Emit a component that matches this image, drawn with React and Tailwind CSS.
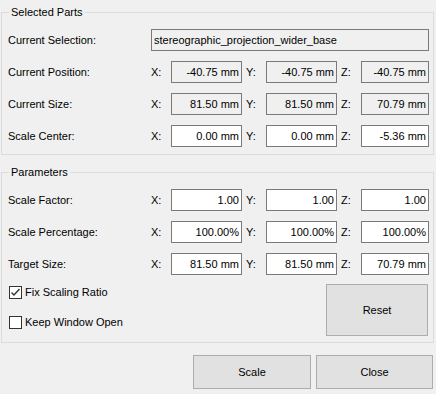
import React from 'react';

const FONT = { fontFamily: '"Liberation Sans", Arial, sans-serif' };

const Field = ({ value, width, editable, left }) => (
  <div
    className={`h-[22px] border border-[#7a7a7a] flex items-center px-[2px] text-[11px] text-black whitespace-nowrap overflow-hidden ${
      editable ? 'bg-white' : 'bg-[#f0f0f0]'
    } ${left ? 'justify-start' : 'justify-end'}`}
    style={{ width }}
  >
    {value}
  </div>
);

const XYZRow = ({ label, values, editable }) => (
  <div className="flex items-center h-[22px]">
    <div className="w-[143px] text-[11px]">{label}</div>
    <div className="w-[20px] text-[11px]">X:</div>
    <Field value={values[0]} width={71} editable={editable} />
    <div className="w-[24px] pl-[4px] text-[11px]">Y:</div>
    <Field value={values[1]} width={71} editable={editable} />
    <div className="w-[24px] pl-[4px] text-[11px]">Z:</div>
    <Field value={values[2]} width={68} editable={editable} />
  </div>
);

const Group = ({ title, className, children }) => (
  <div className={`relative border border-[#dcdcdc] ml-[1px] w-[433px] ${className}`}>
    {/* legend sits over the top border */}
    <span className="absolute -top-[8px] left-[7px] px-[2px] bg-[#f0f0f0] text-[11px] leading-[14px]">
      {title}
    </span>
    {children}
  </div>
);

const Checkbox = ({ label, checked }) => (
  <div className="flex items-center h-[13px] gap-[3px]">
    <div className="w-[13px] h-[13px] border border-[#333333] bg-white flex items-center justify-center">
      {checked && (
        <svg width="11" height="11" viewBox="0 0 11 11">
          <path d="M1.5 5.5 L4 8 L9.5 2" fill="none" stroke="#333333" strokeWidth="1.4" />
        </svg>
      )}
    </div>
    <span className="text-[11px]">{label}</span>
  </div>
);

const Button = ({ label, className }) => (
  <button className={`border border-[#adadad] bg-[#e1e1e1] text-[11px] text-black flex items-center justify-center ${className}`}>
    {label}
  </button>
);

export default function App() {
  return (
    <div className="w-[436px] h-[394px] bg-[#f0f0f0] text-black pt-[12px] overflow-hidden" style={FONT}>
      <Group title="Selected Parts" className="pt-[16px] pb-[7px] pl-[6px]">
        <div className="flex flex-col gap-[10px]">
          <div className="flex items-center h-[22px]">
            <div className="w-[143px] text-[11px]">Current Selection:</div>
            <Field value="stereographic_projection_wider_base" width={278} left />
          </div>
          <XYZRow label="Current Position:" values={['-40.75 mm', '-40.75 mm', '-40.75 mm']} />
          <XYZRow label="Current Size:" values={['81.50 mm', '81.50 mm', '70.79 mm']} />
          <XYZRow label="Scale Center:" values={['0.00 mm', '0.00 mm', '-5.36 mm']} editable />
        </div>
      </Group>

      <Group title="Parameters" className="mt-[17px] pt-[16px] pb-[6px] pl-[6px]">
        <div className="flex flex-col gap-[10px]">
          <XYZRow label="Scale Factor:" values={['1.00', '1.00', '1.00']} editable />
          <XYZRow label="Scale Percentage:" values={['100.00%', '100.00%', '100.00%']} editable />
          <XYZRow label="Target Size:" values={['81.50 mm', '81.50 mm', '70.79 mm']} editable />
        </div>
        <div className="flex justify-between mt-[9px] pr-[5px]">
          <div className="flex flex-col gap-[17px] pt-[2px] pl-[1px]">
            <Checkbox label="Fix Scaling Ratio" checked />
            <Checkbox label="Keep Window Open" />
          </div>
          <Button label="Reset" className="w-[102px] h-[52px]" />
        </div>
      </Group>

      <div className="flex justify-end gap-[5px] mt-[12px] pr-[3px]">
        <Button label="Scale" className="w-[118px] h-[34px]" />
        <Button label="Close" className="w-[117px] h-[34px]" />
      </div>
    </div>
  );
}
